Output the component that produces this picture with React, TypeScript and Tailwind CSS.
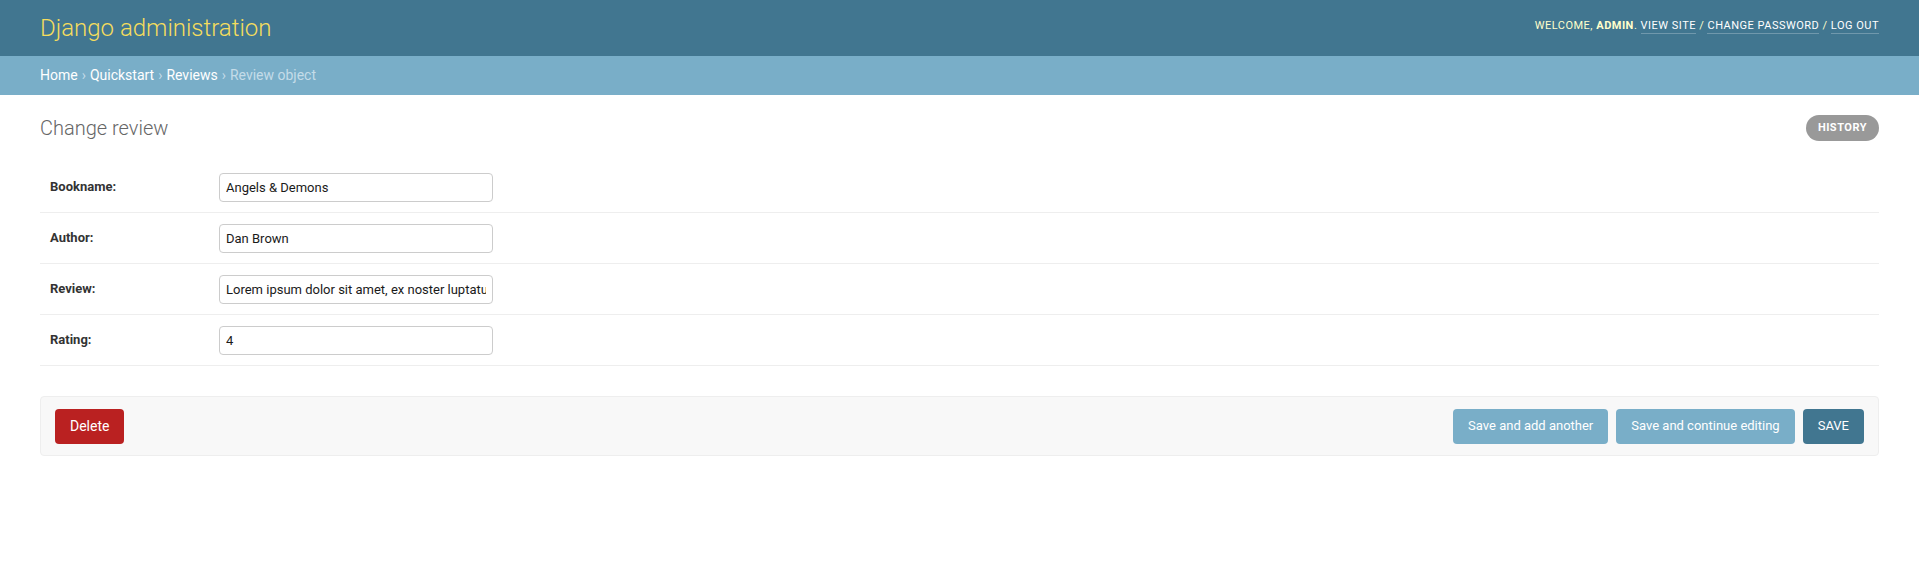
import React from "react";

interface FieldProps {
  label: string;
  value: string;
}

const FormRow: React.FC<FieldProps> = ({ label, value }: FieldProps) => {
  return (
    <div className="flex items-center h-[51px] px-[10px] border-b border-[#eeeeee]">
      <label className="w-[169px] shrink-0 text-[13px] font-bold text-[#333333]">
        {label}
      </label>
      <input
        type="text"
        defaultValue={value}
        readOnly
        className="w-[274px] h-[29px] px-[6px] border border-[#cccccc] rounded-[4px] text-[13px] text-[#1a1a1a] outline-none"
      />
    </div>
  );
};

const fields: FieldProps[] = [
  { label: "Bookname:", value: "Angels & Demons" },
  { label: "Author:", value: "Dan Brown" },
  {
    label: "Review:",
    value:
      "Lorem ipsum dolor sit amet, ex noster luptatum sententiae mea, vix ne dicant",
  },
  { label: "Rating:", value: "4" },
];

export default function App() {
  return (
    <div className="min-h-screen bg-white font-['Roboto','Liberation_Sans',sans-serif] text-[#333333]">
      {/* header */}
      <div className="flex items-center justify-between h-[56px] px-[40px] bg-[#417690]">
        <h1 className="text-[24px] font-light text-[#f5dd5d] leading-none -mt-[1px]">
          Django administration
        </h1>
        <div className="text-[11px] uppercase tracking-[0.5px] text-[#ffffcc] -mt-[3px]">
          Welcome, <strong className="font-bold">admin</strong>.{" "}
          <a className="text-white border-b border-white/25 pb-[1px]">View site</a>{" "}
          /{" "}
          <a className="text-white border-b border-white/25 pb-[1px]">
            Change password
          </a>{" "}
          / <a className="text-white border-b border-white/25 pb-[1px]">Log out</a>
        </div>
      </div>

      {/* breadcrumbs */}
      <div className="flex items-center h-[39px] px-[40px] bg-[#79aec8] text-[14px] text-[#c4dce8]">
        <a className="text-white">Home</a>
        <span className="mx-[4px]">›</span>
        <a className="text-white">Quickstart</a>
        <span className="mx-[4px]">›</span>
        <a className="text-white">Reviews</a>
        <span className="mx-[4px]">›</span>
        <span>Review object</span>
      </div>

      {/* content */}
      <div className="px-[40px] pt-[20px]">
        <div className="flex items-start justify-between h-[47px]">
          <h1 className="text-[20px] font-light text-[#666666] leading-[26px]">
            Change review
          </h1>
          <a className="flex items-center h-[26px] px-[12px] rounded-[15px] bg-[#999999] text-white text-[11px] font-bold uppercase tracking-[0.5px]">
            History
          </a>
        </div>

        <div className="flex flex-col">
          {fields.map((f) => (
            <FormRow key={f.label} label={f.label} value={f.value} />
          ))}
        </div>

        <div className="flex items-center justify-between mt-[30px] h-[60px] px-[14px] bg-[#f8f8f8] border border-[#eeeeee] rounded-[4px]">
          <a className="flex items-center h-[35px] px-[15px] rounded-[4px] bg-[#ba2121] text-white text-[14px]">
            Delete
          </a>
          <div className="flex items-center gap-[8px]">
            <button className="h-[35px] px-[15px] rounded-[4px] bg-[#79aec8] text-white text-[13px]">
              Save and add another
            </button>
            <button className="h-[35px] px-[15px] rounded-[4px] bg-[#79aec8] text-white text-[13px]">
              Save and continue editing
            </button>
            <button className="h-[35px] px-[15px] rounded-[4px] bg-[#417690] text-white text-[13px]">
              SAVE
            </button>
          </div>
        </div>
      </div>
    </div>
  );
}
